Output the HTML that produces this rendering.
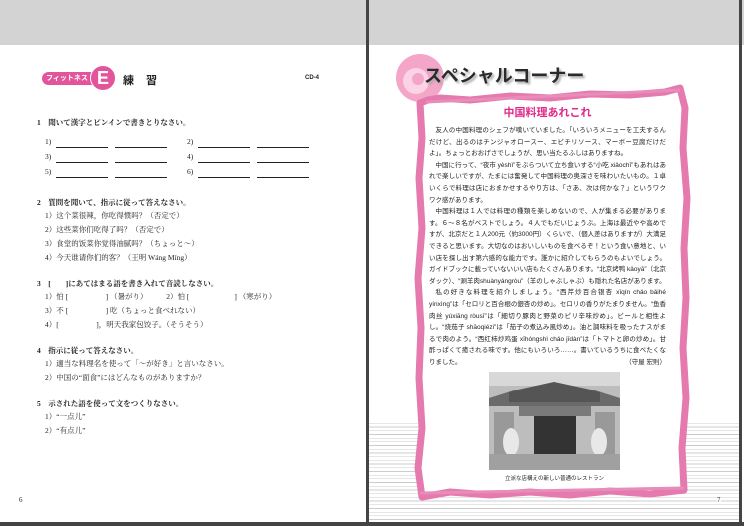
<!DOCTYPE html>
<html><head><meta charset="utf-8"><style>
*{margin:0;padding:0;box-sizing:border-box}
body{width:744px;height:526px;overflow:hidden;background:#fff;position:relative;font-family:"Liberation Serif","Noto Serif CJK SC","Noto Sans CJK JP",serif;color:#222}
.a{position:absolute;white-space:nowrap}
.s{font-family:"Liberation Sans","Noto Sans CJK JP",sans-serif}
.top{left:0;top:0;width:744px;height:45px;background:#d3d3d3}
.q{font-size:7.5px;font-weight:bold}
.i{font-size:7.5px}
.ln{position:absolute;height:1px;background:#222}
.body{left:429px;top:125px;width:237px;font-size:6.5px;line-height:11.6px;white-space:normal;font-family:"Liberation Sans","Noto Sans CJK JP",sans-serif;text-align:justify}
.body p{text-indent:1em}
</style></head><body>
<div class="a top"></div>
<div class="a" style="left:366px;top:0;width:3px;height:526px;background:#444"></div>
<div class="a" style="left:739px;top:0;width:3px;height:526px;background:#444"></div>
<div class="a" style="left:0;top:522px;width:744px;height:4px;background:#444"></div>
<div class="a" style="left:369px;top:420px;width:370px;height:101px;background:repeating-linear-gradient(#fff 0 3px,#ccc 3px 3.7px)"></div>

<div class="a s" style="left:42px;top:72px;width:56px;height:13px;background:#e3559b;border-radius:7px;color:#fff;font-size:7px;font-weight:bold;line-height:13px;padding-left:4px">フィットネス</div>
<div class="a s" style="left:90px;top:65px;width:26px;height:26px;background:#e3559b;border-radius:50%;color:#fff;font-size:18px;font-weight:bold;line-height:24px;text-align:center;border:1.5px solid #fff">E</div>
<div class="a s" style="left:123px;top:72px;font-size:11px;font-weight:bold;letter-spacing:12px">練習</div>
<div class="a s" style="left:305px;top:75px;font-size:6px;font-weight:bold">CD-4</div>

<div class="a q" style="left:37px;top:117px">1　聞いて漢字とピンインで書きとりなさい。</div>
<div class="a i" style="left:45px;top:137px">1)</div><div class="a i" style="left:45px;top:152px">3)</div><div class="a i" style="left:45px;top:167px">5)</div>
<div class="a i" style="left:187px;top:137px">2)</div><div class="a i" style="left:187px;top:152px">4)</div><div class="a i" style="left:187px;top:167px">6)</div>
<div class="ln" style="left:56px;top:147px;width:52px"></div><div class="ln" style="left:115px;top:147px;width:52px"></div>
<div class="ln" style="left:56px;top:162px;width:52px"></div><div class="ln" style="left:115px;top:162px;width:52px"></div>
<div class="ln" style="left:56px;top:177px;width:52px"></div><div class="ln" style="left:115px;top:177px;width:52px"></div>
<div class="ln" style="left:198px;top:147px;width:52px"></div><div class="ln" style="left:257px;top:147px;width:52px"></div>
<div class="ln" style="left:198px;top:162px;width:52px"></div><div class="ln" style="left:257px;top:162px;width:52px"></div>
<div class="ln" style="left:198px;top:177px;width:52px"></div><div class="ln" style="left:257px;top:177px;width:52px"></div>

<div class="a q" style="left:37px;top:197px">2　質問を聞いて、指示に従って答えなさい。</div>
<div class="a i" style="left:45px;top:210px">1）这个菜很辣，你吃得惯吗？（否定で）</div>
<div class="a i" style="left:45px;top:224px">2）这些菜你们吃得了吗？（否定で）</div>
<div class="a i" style="left:45px;top:238px">3）食堂的饭菜你觉得油腻吗？（ちょっと～）</div>
<div class="a i" style="left:45px;top:252px">4）今天谁请你们的客？（王明 Wáng Míng）</div>

<div class="a q" style="left:37px;top:278px">3　[　　]にあてはまる語を書き入れて音読しなさい。</div>
<div class="a i" style="left:45px;top:291px">1）怕 [　　　　　] （暑がり）　　　2）怕 [　　　　　　] （寒がり）</div>
<div class="a i" style="left:45px;top:305px">3）不 [　　　　　] 吃（ちょっと食べれない）</div>
<div class="a i" style="left:45px;top:319px">4）[　　　　　]，明天我家包饺子。（そうそう）</div>

<div class="a q" style="left:37px;top:345px">4　指示に従って答えなさい。</div>
<div class="a i" style="left:45px;top:358px">1）適当な料理名を使って「～が好き」と言いなさい。</div>
<div class="a i" style="left:45px;top:372px">2）中国の“面食”にはどんなものがありますか？</div>

<div class="a q" style="left:37px;top:398px">5　示された語を使って文をつくりなさい。</div>
<div class="a i" style="left:45px;top:411px">1）“一点儿”</div>
<div class="a i" style="left:45px;top:425px">2）“有点儿”</div>
<div class="a" style="left:19px;top:496px;font-size:7px">6</div>
<div class="a" style="left:717px;top:496px;font-size:7px;background:#fff">7</div>

<svg class="a" style="left:380px;top:48px" width="330" height="455" viewBox="0 0 330 455">
<circle cx="40" cy="30" r="24" fill="#f3a6c8"/>
<circle cx="36" cy="33" r="13" fill="#fbd3e4"/>
<circle cx="38" cy="31" r="6" fill="#f3a6c8"/>
<path d="M48 52 L60 50 90 52 130 48 170 50 210 46 250 47 285 44 300 40 305 60 303 100 307 150 304 200 306 250 303 300 306 350 302 400 304 442 270 446 230 443 190 447 150 444 110 447 70 444 42 449 38 420 42 380 39 330 41 280 38 230 42 180 39 130 42 90 40 55 Z" fill="#fff" stroke="#e57aaf" stroke-width="7" stroke-linejoin="round"/>
<path d="M46 54 L300 42 M40 445 L304 440" stroke="#e88dbb" stroke-width="3" fill="none"/>
</svg>
<div class="a s" style="left:424px;top:62px;font-size:18px;font-weight:bold;color:#2a2a2a;text-shadow:2px 2px 2px #aaa">スペシャルコーナー</div>
<div class="a s" style="left:430px;top:104px;width:235px;text-align:center;font-size:11px;font-weight:bold;color:#e0288a">中国料理あれこれ</div>
<div class="a body">
<p>友人の中国料理のシェフが嘆いていました。「いろいろメニューを工夫するんだけど、出るのはチンジャオロースー、エビチリソース、マーボー豆腐だけだよ」。ちょっとおおげさでしょうが、思い当たるふしはありますね。</p>
<p>中国に行って、“夜市 yèshì”をぶらついて立ち食いする“小吃 xiǎochī”もあれはあれで楽しいですが、たまには奮発して中国料理の奥深さを味わいたいもの。１卓いくらで料理は店におまかせするやり方は、「さあ、次は何かな？」というワクワク感があります。</p>
<p>中国料理は１人では料理の種類を楽しめないので、人が集まる必要があります。６～８名がベストでしょう。４人でもだいじょうぶ。上海は最近やや高めですが、北京だと１人200元（約3000円）くらいで、（個人差はありますが）大満足できると思います。大切なのはおいしいものを食べるぞ！という食い意地と、いい店を探し出す第六感的な能力です。誰かに紹介してもらうのもよいでしょう。ガイドブックに載っていないいい店もたくさんあります。“北京烤鸭 kǎoyā”（北京ダック）、“涮羊肉shuànyángròu”（羊のしゃぶしゃぶ）も隠れた名店があります。</p>
<p>私の好きな料理を紹介しましょう。“西芹炒百合银杏 xīqín chǎo bǎihé yínxìng”は「セロリと百合根の銀杏の炒め」。セロリの香りがたまりません。“鱼香肉丝 yúxiāng ròusī”は「細切り豚肉と野菜のピリ辛味炒め」。ビールと相性よし。“烧茄子 shāoqiézi”は「茄子の煮込み風炒め」。油と調味料を吸ったナスがまるで肉のよう。“西红柿炒鸡蛋 xīhóngshì chǎo jīdàn”は「トマトと卵の炒め」。甘酢っぱくて癒される味です。他にもいろいろ……。書いているうちに食べたくなりました。<span style="float:right">（守屋 宏則）</span></p>
</div>
<svg class="a" style="left:489px;top:372px" width="131" height="98">
<rect width="131" height="98" fill="#bdbdbd"/>
<rect y="0" width="131" height="14" fill="#d8d8d8"/>
<path d="M0 26 L25 18 L106 18 L131 26 L131 34 L0 34Z" fill="#6a6a6a"/>
<path d="M20 20 L65 10 L111 20 L111 30 L20 30Z" fill="#555"/>
<rect x="30" y="34" width="72" height="10" fill="#7a7a7a"/>
<rect x="45" y="44" width="42" height="38" fill="#333"/>
<rect x="5" y="40" width="20" height="50" fill="#999"/>
<rect x="106" y="40" width="20" height="50" fill="#999"/>
<ellipse cx="22" cy="70" rx="8" ry="14" fill="#e8e8e8"/>
<ellipse cx="110" cy="70" rx="8" ry="14" fill="#e8e8e8"/>
<rect x="0" y="82" width="131" height="16" fill="#a0a0a0"/>
</svg>
<div class="a s" style="left:489px;top:474px;width:131px;text-align:center;font-size:5.5px">立派な店構えの新しい普通のレストラン</div>
</body></html>
